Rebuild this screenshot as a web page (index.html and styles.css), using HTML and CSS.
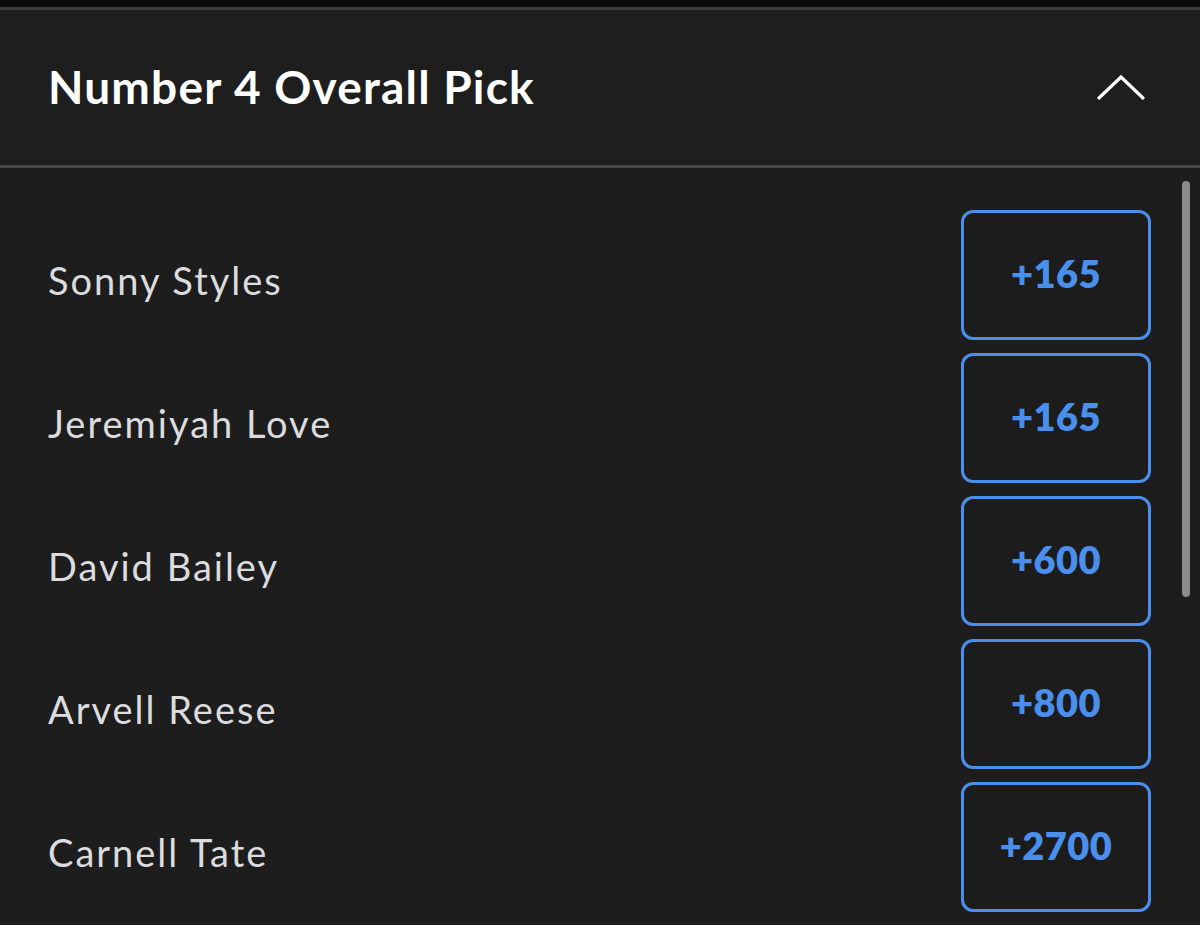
FILE: index.html
```html
<!DOCTYPE html>
<html>
<head>
<meta charset="utf-8">
<link rel="stylesheet" href="styles.css">
</head>
<body>
<div class="topstrip"></div>
<header class="header">
  <h1 class="title">Number 4 Overall Pick</h1>
  <svg class="chevron" width="48" height="26" viewBox="0 0 48 26"><path d="M2 24 L24 3 L46 24" fill="none" stroke="#ffffff" stroke-width="3.2" stroke-linecap="round" stroke-linejoin="miter"/></svg>
</header>
<main class="body">
  <div class="list">
    <div class="row"><span class="name">Sonny Styles</span><button class="odds">+165</button></div>
    <div class="row"><span class="name">Jeremiyah Love</span><button class="odds">+165</button></div>
    <div class="row"><span class="name">David Bailey</span><button class="odds">+600</button></div>
    <div class="row"><span class="name">Arvell Reese</span><button class="odds">+800</button></div>
    <div class="row"><span class="name">Carnell Tate</span><button class="odds">+2700</button></div>
  </div>
  <div class="scrollbar"></div>
</main>
</body>
</html>
```
FILE: styles.css
```css
html, body {
  margin: 0;
  padding: 0;
  background: #1d1d1e;
  width: 1200px;
  height: 925px;
  overflow: hidden;
  font-family: "Lato", "Noto Sans", sans-serif;
}
.topstrip {
  height: 7px;
  background: #0b0c0e;
  border-bottom: 3px solid #3c3d3f;
}
.header {
  height: 158px;
  background: #1e1e1f;
  border-bottom: 3px solid #48484a;
  display: flex;
  align-items: center;
  justify-content: space-between;
  padding: 0 55px 0 48px;
  box-sizing: border-box;
}
.title {
  margin: 0;
  color: #ffffff;
  font-size: 46px;
  font-weight: 700;
  letter-spacing: 1.2px;
  padding-bottom: 2px;
}
.chevron {
  margin-top: -2px;
}
.body {
  position: relative;
  height: 760px;
  background: #1d1d1e;
}
.list {
  display: flex;
  flex-direction: column;
  gap: 13px;
  padding: 42px 48px 0 48px;
}
.row {
  display: flex;
  align-items: center;
  justify-content: space-between;
  height: 130px;
}
.name {
  color: #dcdcde;
  font-size: 38px;
  font-weight: 400;
  letter-spacing: 2px;
  margin-top: 10px;
}
.odds {
  width: 190px;
  height: 130px;
  background: #1c1c1d;
  border: 3px solid #4a8fec;
  border-radius: 12px;
  color: #4a8fec;
  font-family: "Lato", "Noto Sans", sans-serif;
  font-size: 38px;
  font-weight: 800;
  letter-spacing: 0.5px;
  padding: 0;
  padding-bottom: 4px;
  margin-right: 1px;
}
.scrollbar {
  position: absolute;
  top: 13px;
  left: 1182px;
  width: 8px;
  height: 416px;
  background: #8a8a8c;
  border-radius: 4px;
}
```
